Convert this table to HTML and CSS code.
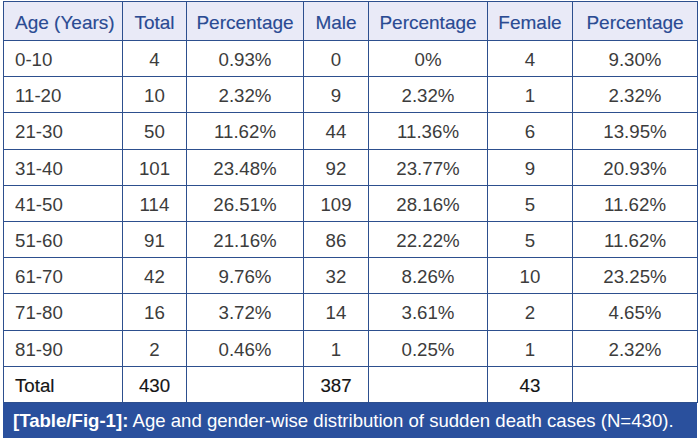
FILE: index.html
```html
<!DOCTYPE html>
<html>
<head>
<meta charset="utf-8">
<link rel="stylesheet" href="styles.css">
</head>
<body>
<div class="figure">
<table class="data">
<colgroup>
<col class="c-age"><col class="c-total"><col class="c-pct"><col class="c-male"><col class="c-pct2"><col class="c-female"><col class="c-pct3">
</colgroup>
<thead>
<tr><th class="left">Age (Years)</th><th>Total</th><th>Percentage</th><th>Male</th><th>Percentage</th><th>Female</th><th>Percentage</th></tr>
</thead>
<tbody>
<tr><td class="left">0-10</td><td>4</td><td>0.93%</td><td>0</td><td>0%</td><td>4</td><td>9.30%</td></tr>
<tr><td class="left">11-20</td><td>10</td><td>2.32%</td><td>9</td><td>2.32%</td><td>1</td><td>2.32%</td></tr>
<tr><td class="left">21-30</td><td>50</td><td>11.62%</td><td>44</td><td>11.36%</td><td>6</td><td>13.95%</td></tr>
<tr><td class="left">31-40</td><td>101</td><td>23.48%</td><td>92</td><td>23.77%</td><td>9</td><td>20.93%</td></tr>
<tr><td class="left">41-50</td><td>114</td><td>26.51%</td><td>109</td><td>28.16%</td><td>5</td><td>11.62%</td></tr>
<tr><td class="left">51-60</td><td>91</td><td>21.16%</td><td>86</td><td>22.22%</td><td>5</td><td>11.62%</td></tr>
<tr><td class="left">61-70</td><td>42</td><td>9.76%</td><td>32</td><td>8.26%</td><td>10</td><td>23.25%</td></tr>
<tr><td class="left">71-80</td><td>16</td><td>3.72%</td><td>14</td><td>3.61%</td><td>2</td><td>4.65%</td></tr>
<tr><td class="left">81-90</td><td>2</td><td>0.46%</td><td>1</td><td>0.25%</td><td>1</td><td>2.32%</td></tr>
<tr class="total"><td class="left">Total</td><td>430</td><td></td><td>387</td><td></td><td>43</td><td></td></tr>
</tbody>
</table>
<div class="caption"><b>[Table/Fig-1]:</b> Age and gender-wise distribution of sudden death cases (N=430).</div>
</div>
</body>
</html>
```

FILE: styles.css
```css
html, body {
  margin: 0;
  padding: 0;
  background: #ffffff;
}
body {
  font-family: "Liberation Sans", Arial, sans-serif;
}
.figure {
  width: 694px;
  margin: 1px 0 0 3px;
}
.data {
  width: 694px;
  border-collapse: collapse;
  table-layout: fixed;
  font-size: 18.7px;
}
.c-age { width: 119px; }
.c-total { width: 64px; }
.c-pct { width: 117px; }
.c-male { width: 65px; }
.c-pct2 { width: 119px; }
.c-female { width: 85px; }
.c-pct3 { width: 125px; }
.data th, .data td {
  border: 1px solid #2d4f8e;
  text-align: center;
  padding: 0;
  white-space: nowrap;
}
.data th {
  height: 35px;
  background: #e9eaf7;
  color: #2a4b93;
  font-size: 19px;
  font-weight: normal;
  -webkit-text-stroke: 0.15px #2a4b93;
  padding-top: 3px;
  padding-bottom: 0;
}
.data td {
  height: 32.2px;
  color: #3c3c3c;
  padding-top: 3px;
}
.data .left {
  text-align: left;
  padding-left: 11px;
}
.data .total td {
  color: #151515;
  -webkit-text-stroke: 0.15px #151515;
}
.caption {
  height: 35px;
  line-height: 36px;
  background: #2a509d;
  color: #ffffff;
  font-size: 18.6px;
  padding-left: 10px;
  white-space: nowrap;
}
.caption b {
  font-weight: bold;
}
```
